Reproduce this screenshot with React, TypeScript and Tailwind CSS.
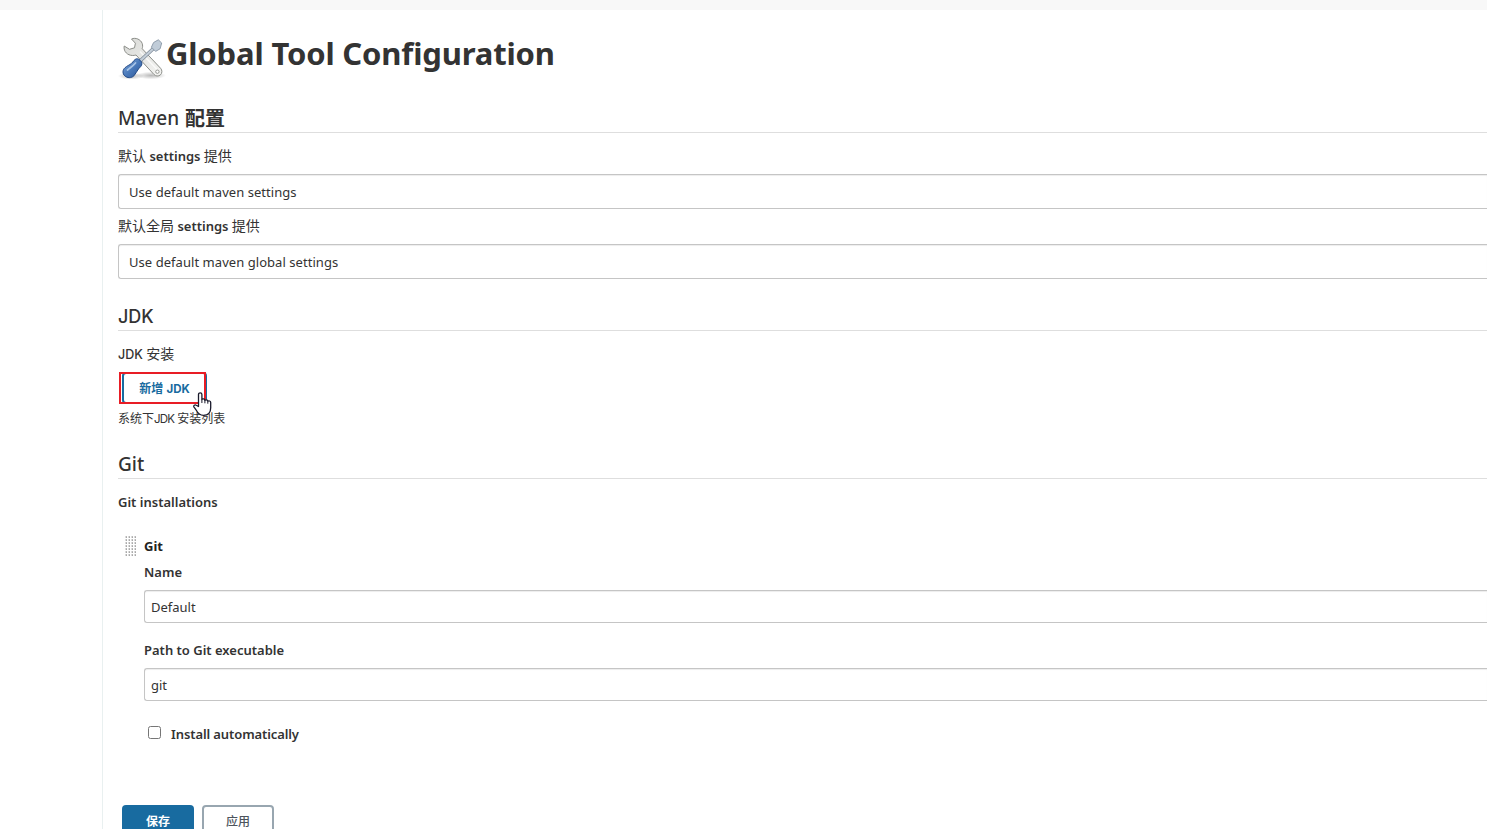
import React, { useState } from 'react';

const ToolsIcon = () => (
  <svg width="48" height="48" viewBox="0 0 48 48" className="-mt-px shrink-0">
    <defs>
      <linearGradient id="steel" x1="0" y1="0" x2="1" y2="1">
        <stop offset="0" stopColor="#d9dad7" />
        <stop offset="1" stopColor="#f4f4f2" />
      </linearGradient>
      <linearGradient id="handle" x1="0" y1="0" x2="1" y2="1">
        <stop offset="0" stopColor="#86abd9" />
        <stop offset="0.5" stopColor="#4a7abb" />
        <stop offset="1" stopColor="#2b5596" />
      </linearGradient>
      <radialGradient id="shade">
        <stop offset="0" stopColor="#000" stopOpacity="0.28" />
        <stop offset="1" stopColor="#000" stopOpacity="0" />
      </radialGradient>
    </defs>
    <ellipse cx="13" cy="43" rx="13" ry="3.6" fill="url(#shade)" />
    <ellipse cx="33" cy="42.5" rx="15" ry="3.8" fill="url(#shade)" />
    {/* wrench */}
    <path
      d="M13.500 6C17.500 4.200 22.700 6.300 24.200 10.500c.6 2 .5 3.600 0 5.200L42.600 35.300c1.800 2 1.700 4.900-.2 6.600-1.900 1.600-4.700 1.500-6.400-.4L18 22c-4.900 1.500-9.900-.6-11.500-4.800-.5-1.500-.6-2.800-.3-4.200l5.300 3.300 5-1.500.9-4.600z"
      fill="url(#steel)"
      stroke="#8c8e89"
      strokeLinejoin="round"
    />
    <path d="M22 18.500l17 18" stroke="#fff" strokeWidth="1.500" opacity="0.7" />
    <circle cx="39.400" cy="38.700" r="1.700" fill="#fff" stroke="#8c8e89" strokeWidth="0.900" />
    {/* screwdriver */}
    <path d="M36.500 14.500L21.500 28.500" stroke="#7e8b98" strokeWidth="3.600" />
    <path d="M36.500 14.500L21.500 28.500" stroke="#c3cdd7" strokeWidth="2.200" />
    <path d="M40.300 6.800l3.400 3.200-1.600 5.800-4.500 2.600-4.200-4.200 2.200-4.700z" fill="#c0ccd8" stroke="#8795a5" strokeWidth="0.900" strokeLinejoin="round" />
    <path
      d="M18.500 25.800c2-.5 5.700 2.700 5.400 5.100-.1 2-1.900 3.300-3.400 5-1.600 2-2.600 4.700-4.600 6.900-2.600 2.600-6.600 2.300-9.100.1-2.400-2.200-2.400-5.800 0-8 2.200-2.100 4.700-2.800 6.700-4.500 1.800-1.600 2.900-4.200 5-4.600z"
      fill="url(#handle)"
      stroke="#234a87"
    />
    <path d="M17.500 30c-2.500 3-5 4.500-8 7" stroke="#c6dbf3" strokeWidth="1.800" strokeLinecap="round" fill="none" opacity="0.75" />
  </svg>
);

const HandCursor = () => (
  <svg width="19" height="25" viewBox="0 0 19 25" className="absolute left-[75px] top-[20px]">
    <path
      d="M5.500 14.500V2.600c0-2.300 3.400-2.300 3.400 0V7.500c.6-.9 2.700-.8 3 .8.700-.8 2.600-.6 2.900.9.900-.7 2.900-.3 2.900 1.400v5.200c0 4.800-2.700 7.600-7.200 7.600-3.800 0-5.700-2-7.200-5.100-.8-1.400-1.600-2.300-2.300-3.200-.9-1.500.9-2.800 2.300-1.900z"
      fill="#fff"
      stroke="#1a1a2b"
      strokeWidth="1.300"
      strokeLinejoin="round"
    />
    <path d="M8.900 7.500v3.500M11.900 8.300v3M14.800 9.200v2.500" stroke="#1a1a2b" />
  </svg>
);

// rows of small raised dots
const DragHandle = () => (
  <svg width="12" height="20" viewBox="0 0 12 20" className="shrink-0">
    <defs>
      <pattern id="dots" width="3" height="3" patternUnits="userSpaceOnUse">
        <rect width="2" height="2" fill="#dcdcdc" />
        <rect x="1" y="0" width="1" height="1" fill="#b8b8b8" />
        <rect x="1" y="1" width="1" height="1" fill="#a8a8a8" />
      </pattern>
    </defs>
    <rect width="12" height="20" fill="url(#dots)" />
  </svg>
);

const SectionTitle = ({ children }: { children: React.ReactNode }) => (
  <h2 className="h-[30px] border-b border-[#dedede] text-[19px] leading-[31px] font-medium">{children}</h2>
);

const Label = ({ children }: { children: React.ReactNode }) => (
  <div className="h-5 text-[13px] leading-5 font-semibold">{children}</div>
);

const Cjk = ({ children }: { children: React.ReactNode }) => (
  <span className="text-[14px] font-normal">{children}</span>
);

const SelectBox = ({ children }: { children: React.ReactNode }) => (
  <div className="h-[35px] rounded-l-[3px] border border-r-0 border-[#c5c5c5] pl-2.5 text-[13px] leading-[34px] tracking-[0.05px] shadow-[inset_0_1px_1px_rgba(0,0,0,0.075)]">
    {children}
  </div>
);

const TextBox = ({ value }: { value: string }) => (
  <div className="h-[33px] rounded-l-[3px] border border-r-0 border-[#c5c5c5] pl-1.5 text-[13px] leading-[32px] shadow-[inset_0_1px_1px_rgba(0,0,0,0.075)]">
    {value}
  </div>
);

export default function App() {
  const [auto, setAuto] = useState(false);

  return (
    <div className="flex h-[829px] w-full flex-col overflow-hidden bg-white font-['Noto_Sans','Noto_Sans_CJK_SC',sans-serif] text-[#333]">
      <div className="h-2.5 shrink-0 bg-[#f8f8f8]" />
      <div className="flex min-h-0 flex-1">
        <aside className="w-[102px] shrink-0" />
        <main className="min-w-0 flex-1 border-l border-[#e9f0f0] pl-[15px]">
          <div className="flex h-[93px] pt-[24px]">
            <ToolsIcon />
            <h1 className="text-[31px] leading-[38px] font-bold tracking-[-0.16px] whitespace-nowrap">Global Tool Configuration</h1>
          </div>

          <section className="h-[198px]">
            <h2 className="h-[30px] border-b border-[#dedede] text-[19px] leading-[29px] font-medium">
              Maven <span className="relative top-px ml-px text-[20px] font-bold">配置</span>
            </h2>
            <div className="pt-[13px]">
              <Label><Cjk>默认</Cjk> settings <Cjk>提供</Cjk></Label>
              <div className="mt-2"><SelectBox>Use default maven settings</SelectBox></div>
            </div>
            <div className="pt-[7px]">
              <Label><Cjk>默认全局</Cjk> settings <Cjk>提供</Cjk></Label>
              <div className="mt-2"><SelectBox>Use default maven global settings</SelectBox></div>
            </div>
          </section>

          <section className="h-[148px]">
            <SectionTitle>
              <span className="font-[Inter,sans-serif] text-[18px]">JDK</span>
            </SectionTitle>
            <div className="pt-[13px]">
              <Label><span className="font-[Inter,sans-serif] text-[12.5px] font-medium">JDK</span> <Cjk>安装</Cjk></Label>
            </div>
            <div className="relative mt-2 h-8 w-[90px] pl-1">
              <button className="h-8 w-[85px] rounded-[4px] border-2 border-[#186ba0] pt-px text-[12px] leading-[27px] font-bold text-[#186ba0]">
                新增 <span className="font-[Inter,sans-serif] text-[11.5px]">JDK</span>
              </button>
              <div className="absolute top-0 left-px h-8 w-[87px] border-2 border-[#e81d25]" />
              <HandCursor />
            </div>
            <p className="mt-[5px] text-[12px] leading-5 whitespace-nowrap">
              系统下<span className="font-[Inter,sans-serif] text-[11.5px] tracking-[-0.8px]">JDK</span> 安装列表
            </p>
          </section>

          <section>
            <SectionTitle>Git</SectionTitle>
            <div className="pt-[13px]">
              <Label>Git installations</Label>
            </div>
            <div className="mt-[24px] flex pl-[7px]">
              <DragHandle />
              <div className="ml-[7px] min-w-0 flex-1">
                <div className="h-[26px] text-[13px] leading-5 font-bold text-[#222]">Git</div>
                <Label>Name</Label>
                <div className="mt-2"><TextBox value="Default" /></div>
                <div className="mt-[17px]"><Label>Path to Git executable</Label></div>
                <div className="mt-2"><TextBox value="git" /></div>
                <label className="mt-[23px] flex h-5 items-center pl-1 text-[13px] font-semibold tracking-[-0.1px]">
                  <input
                    type="checkbox"
                    checked={auto}
                    onChange={() => setAuto(!auto)}
                    className="mr-2.5 mb-[3px] h-[13px] w-[13px]"
                  />
                  <span className="pt-0.5">Install automatically</span>
                </label>
              </div>
            </div>
          </section>

          <div className="mt-[61px] flex gap-2 pl-1">
            <button className="h-8 w-[72px] rounded-[4px] bg-[#186ba0] pt-px text-[12px] leading-[31px] font-bold text-white">保存</button>
            <button className="h-8 w-[72px] rounded-[4px] border-2 border-[#98a6b0] pt-px text-[12px] leading-[27px] font-medium text-[#4d545d]">应用</button>
          </div>
        </main>
      </div>
    </div>
  );
}
